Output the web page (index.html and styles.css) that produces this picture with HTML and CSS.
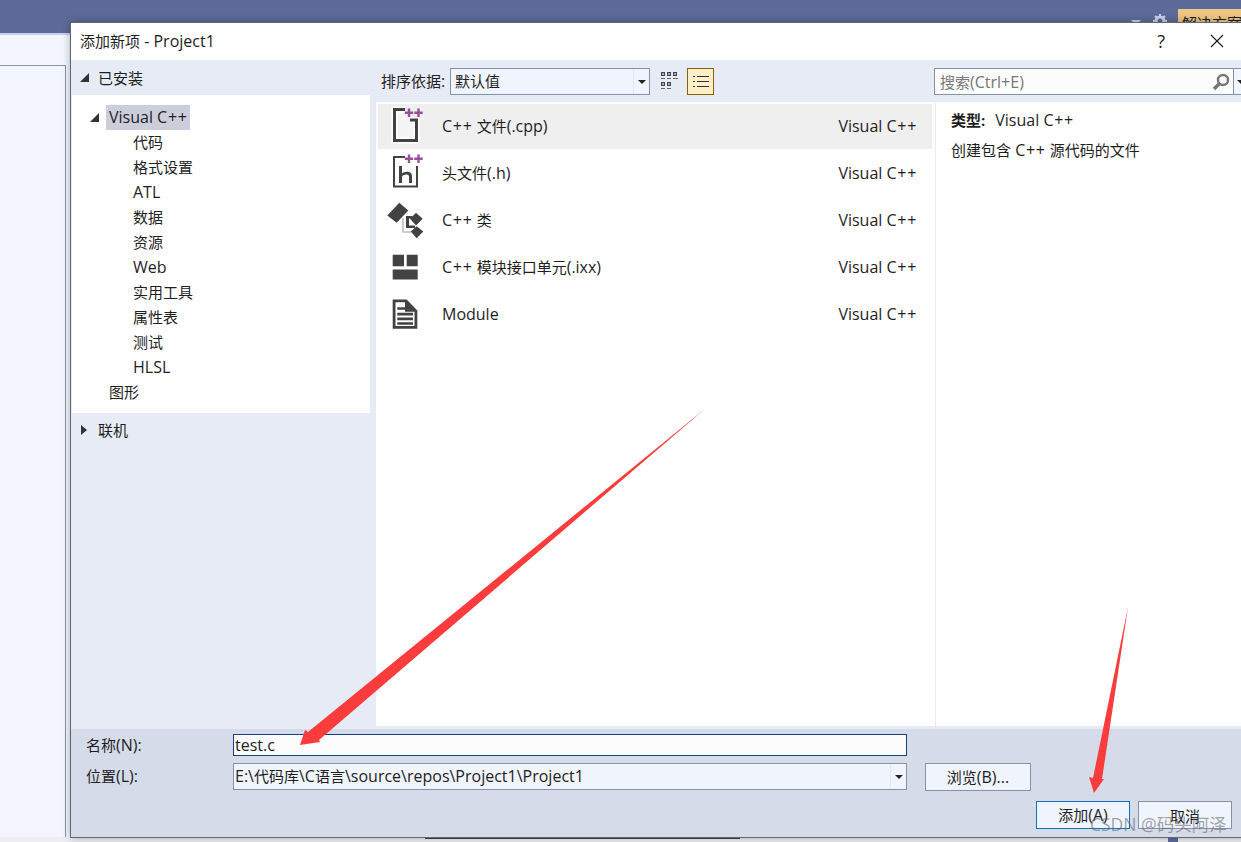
FILE: index.html
```html
<!DOCTYPE html>
<html lang="zh-CN">
<head>
    <meta charset="UTF-8">
    <title>添加新项 - Project1</title>
    <link rel="stylesheet" href="styles.css">
</head>
<body>
    <div class="ide">
        <div class="ide-top">
            <span class="ide-pin"></span>
            <svg class="ide-gear" viewBox="0 0 14 14" width="14" height="14"><circle cx="7" cy="7" r="4" fill="none" stroke="#c9d0e6" stroke-width="3"/><path d="M7 0v3M7 11v3M0 7h3M11 7h3M2 2l2 2M10 10l2 2M12 2l-2 2M4 10l-2 2" stroke="#c9d0e6" stroke-width="2"/></svg>
            <span class="ide-tab zh">解决方案</span>
        </div>
        <div class="ide-strip"></div>
        <div class="ide-main">
            <div class="ide-side"></div>
        </div>
        <div class="ide-bottom">
            <span class="ide-scroll"></span>
            <span class="ide-mark"></span>
        </div>
    </div>

    <div class="dialog">
        <div class="titlebar">
            <span class="title"><span class="zh">添加新项</span> - Project1</span>
            <span class="help">?</span>
            <svg class="close" viewBox="0 0 14 14" width="14" height="14"><path d="M1 1l12 12M13 1L1 13" stroke="#1a1a1a" stroke-width="1.1"/></svg>
        </div>

        <div class="content">
            <div class="left">
                <div class="installed"><span class="tri-open"></span><span class="zh">已安装</span></div>
                <div class="tree">
                    <div class="tree-root"><span class="tri-open"></span><span class="tree-sel">Visual <span class="cpp">C++</span></span></div>
                    <div class="tree-item zh">代码</div>
                    <div class="tree-item zh">格式设置</div>
                    <div class="tree-item">ATL</div>
                    <div class="tree-item zh">数据</div>
                    <div class="tree-item zh">资源</div>
                    <div class="tree-item">Web</div>
                    <div class="tree-item zh">实用工具</div>
                    <div class="tree-item zh">属性表</div>
                    <div class="tree-item zh">测试</div>
                    <div class="tree-item">HLSL</div>
                    <div class="tree-top zh">图形</div>
                </div>
                <div class="online"><span class="tri-closed"></span><span class="zh">联机</span></div>
            </div>

            <div class="center">
                <div class="toolbar">
                    <span class="sort-label"><span class="zh">排序依据</span>:</span>
                    <div class="combo"><span class="combo-text zh">默认值</span><span class="combo-btn"><span class="tri-down"></span></span></div>
                    <svg class="view-grid" viewBox="0 0 18 19" width="18" height="19">
                        <path d="M1 0h4v4H1zM7 0h4v4H7zM13 0h4v4h-4zM1 10h4v4H1zM7 10h4v4H7z" fill="#444"/>
                        <path d="M2 1h2v2H2zM8 1h2v2H8zM14 1h2v2h-2zM2 11h2v2H2zM8 11h2v2H8z" fill="#aab"/>
                        <path d="M1 6h4v1H1zM7 6h4v1H7zM13 6h5v1h-5zM1 16h4v1H1zM7 16h4v1H7z" fill="#666"/>
                    </svg>
                    <span class="view-list">
                        <svg viewBox="0 0 16 14" width="16" height="14"><path d="M0 1h2v1H0zM4 1h12v1H4zM0 6h2v1H0zM4 6h12v1H4zM0 11h2v1H0zM4 11h12v1H4z" fill="#333"/></svg>
                    </span>
                </div>
                <div class="list">
                    <div class="row row-active">
                        <span class="row-icon">
                            <svg viewBox="0 0 38 44" width="38" height="44">
                                <path d="M17 4.500H6.500v31h22V15H22" fill="#f4f4f4" stroke="#fff" stroke-width="6"/>
                                <path d="M17 4.500H6.500v31h22V15H22" fill="none" stroke="#424242" stroke-width="3"/>
                                <path d="M19.800 3.500h2.400v3h3v2.400h-3v3h-2.400v-3h-3V6.500h3zM29.300 3.500h2.400v3h3v2.400h-3v3h-2.400v-3h-3V6.500h3z" fill="#984f99"/>
                            </svg>
                        </span>
                        <span class="row-name"><span class="cpp">C++</span> <span class="zh">文件</span>(.cpp)</span>
                        <span class="row-lang">Visual <span class="cpp">C++</span></span>
                    </div>
                    <div class="row">
                        <span class="row-icon">
                            <svg viewBox="0 0 38 44" width="38" height="44">
                                <path d="M17 6H6v29.500h23V15" fill="#fff" stroke="#fff" stroke-width="5"/>
                                <path d="M17 6H6v29.500h23V15" fill="none" stroke="#424242" stroke-width="2"/>
                                <path d="M11 15h3v7.500c2-2.500 10-3 10 2.500v7h-3v-6.500c0-3-7-2.500-7 .5v6h-3z" fill="#424242"/>
                                <path d="M19.800 3.500h2.400v3h3v2.400h-3v3h-2.400v-3h-3V6.500h3zM29.300 3.500h2.400v3h3v2.400h-3v3h-2.400v-3h-3V6.500h3z" fill="#984f99"/>
                            </svg>
                        </span>
                        <span class="row-name"><span class="zh">头文件</span>(.h)</span>
                        <span class="row-lang">Visual <span class="cpp">C++</span></span>
                    </div>
                    <div class="row">
                        <span class="row-icon">
                            <svg class="icon-class" viewBox="0 0 38 44" width="38" height="44">
                                <path d="M15 20v14h8" fill="none" stroke="#bbb" stroke-width="1.500"/>
                                <path d="M-.7 17.500L11.300 4.800l9 7.700L8.700 24.800z" fill="#424242"/>
                                <path d="M22 20.800l6-6 6.700 6-6.700 6.700z" fill="#424242"/>
                                <path d="M22.700 33.500l6-5.300 6.600 5.300-6.600 6.700z" fill="#424242"/>
                                <path d="M18 18h6v2.500h-3v7h6V30h-9z" fill="#424242"/>
                            </svg>
                        </span>
                        <span class="row-name"><span class="cpp">C++</span> <span class="zh">类</span></span>
                        <span class="row-lang">Visual <span class="cpp">C++</span></span>
                    </div>
                    <div class="row">
                        <span class="row-icon">
                            <svg viewBox="0 0 38 44" width="38" height="44">
                                <path d="M4.700 9.800H16v11.400H4.700zM18.700 9.800h11v11.400h-11zM4.700 24.500h25v10h-25z" fill="#424242"/>
                            </svg>
                        </span>
                        <span class="row-name"><span class="cpp">C++</span> <span class="zh">模块接口单元</span>(.ixx)</span>
                        <span class="row-lang">Visual <span class="cpp">C++</span></span>
                    </div>
                    <div class="row">
                        <span class="row-icon">
                            <svg viewBox="0 0 38 44" width="38" height="44">
                                <path d="M4.700 7.500h14l10.600 11v18.300H4.700z" fill="#424242"/>
                                <path d="M7.500 10.300h9.500v9.500h9.500v14.200h-19z" fill="#fff"/>
                                <path d="M9.300 15.200h8v2.600h-8zM9.300 20.800H25v2.700H9.300zM9.300 25.500H25v2.700H9.300zM9.300 30.200H25v2.600H9.300z" fill="#424242"/>
                            </svg>
                        </span>
                        <span class="row-name">Module</span>
                        <span class="row-lang">Visual <span class="cpp">C++</span></span>
                    </div>
                </div>
            </div>

            <div class="right">
                <div class="search">
                    <span class="search-text"><span class="zh">搜索</span>(Ctrl+E)</span>
                    <svg class="search-icon" viewBox="0 0 18 18" width="18" height="18"><circle cx="11" cy="7" r="5" fill="none" stroke="#777" stroke-width="2.500"/><path d="M7 11l-5 5" stroke="#777" stroke-width="3.500"/></svg>
                    <span class="search-btn"><span class="tri-down"></span></span>
                </div>
                <div class="details">
                    <div class="detail-type"><b class="zh">类型:</b><span>Visual <span class="cpp">C++</span></span></div>
                    <div class="detail-desc"><span class="zh">创建包含</span> <span class="cpp">C++</span> <span class="zh">源代码的文件</span></div>
                </div>
            </div>
        </div>

        <div class="footer">
            <div class="field-row">
                <span class="field-label"><span class="zh">名称</span>(N):</span>
                <div class="field field-name">test.c</div>
            </div>
            <div class="field-row field-row2">
                <span class="field-label"><span class="zh">位置</span>(L):</span>
                <div class="field field-path"><span class="path-text">E:\<span class="zh">代码库</span>\C<span class="zh">语言</span>\source\repos\Project1\Project1</span><span class="path-btn"><span class="tri-down"></span></span></div>
                <button class="btn btn-browse"><span class="zh">浏览</span>(B)...</button>
            </div>
            <div class="actions">
                <button class="btn btn-add"><span class="zh">添加</span>(A)</button>
                <button class="btn btn-cancel zh">取消</button>
            </div>
        </div>
    </div>

    <svg class="arrows" viewBox="0 0 1241 842" width="1241" height="842">
        <polygon points="706,408 319,740 320,742 300,745 305,730 308,732"/>
        <polygon points="1128,607 1102,779 1104,779 1094,793 1089,777 1093,778"/>
    </svg>
    <div class="watermark">CSDN @码头阿泽</div>
</body>
</html>
```

FILE: styles.css
```css
* {
    box-sizing: border-box;
}

html, body {
    margin: 0;
    height: 842px;
    overflow: hidden;
}

body {
    position: relative;
    font-family: "Open Sans", "Noto Sans CJK SC", sans-serif;
    font-size: 16px;
    color: #1e1e1e;
}

/* chinese text runs a bit smaller than the latin around it */
.zh {
    font-size: 15px;
}

.cpp {
    letter-spacing: 0.7px;
}

/* IDE behind the dialog */
.ide {
    height: 842px;
    display: flex;
    flex-direction: column;
    background: #f3f6fe;
}

.ide-top {
    height: 33px;
    background: #5d6b99;
    display: flex;
    justify-content: flex-end;
    align-items: flex-start;
    padding: 9px 0 0;
}

.ide-pin {
    width: 0;
    height: 0;
    margin: 11px 12px 0 0;
    border-left: 5px solid transparent;
    border-right: 5px solid transparent;
    border-top: 5px solid #c9d0e6;
}

.ide-gear {
    margin: 5px 11px 0 0;
}

.ide-tab {
    width: 63px;
    height: 24px;
    padding: 3px 0 0 4px;
    background: #efc584;
    white-space: nowrap;
    overflow: hidden;
}

.ide-strip {
    height: 2px;
    background: #c7d0ef;
}

.ide-main {
    flex: 1;
    padding-top: 30px;
}

.ide-side {
    width: 66px;
    height: 100%;
    border-top: 1px solid #8a93a8;
    border-right: 1px solid #8a93a8;
}

.ide-bottom {
    height: 5px;
    background: #eeeef2;
    position: relative;
}

.ide-scroll {
    position: absolute;
    left: 425px;
    width: 315px;
    height: 2px;
    background: #444;
}

.ide-mark {
    position: absolute;
    left: 1168px;
    width: 10px;
    height: 5px;
    background: #5d6b99;
}

/* dialog */
.dialog {
    position: absolute;
    left: 70px;
    top: 22px;
    width: 1180px;
    height: 816px;
    display: flex;
    flex-direction: column;
    border: 1px solid #5f6675;
    background: #e6ebf5;
    box-shadow: 0 0 8px rgba(0, 0, 0, 0.3);
}

.titlebar {
    height: 37px;
    flex: none;
    display: flex;
    align-items: center;
    padding-left: 9px;
    padding-bottom: 1px;
    background: #fff;
}

.title {
    flex: 1;
}

.help {
    font-size: 18px;
    margin-right: 45px;
}

.close {
    margin-right: 25px;
}

.content {
    flex: 1;
    display: flex;
}

/* left column */
.left {
    width: 305px;
    flex: none;
}

.installed {
    height: 35px;
    display: flex;
    align-items: center;
    padding-left: 9px;
}

.installed .tri-open {
    margin-right: 9px;
}

.tree {
    width: 298px;
    height: 318px;
    margin-left: 1px;
    padding-top: 9px;
    background: #fff;
}

.tree-root {
    height: 26px;
    display: flex;
    align-items: center;
    padding-left: 18px;
}

.tree-sel {
    margin-left: 7px;
    padding: 0 2px 0 3px;
    height: 25px;
    line-height: 25px;
    background: #cccedb;
}

.tree-item {
    height: 25px;
    line-height: 25px;
    padding-left: 61px;
}

.tree-top {
    height: 25px;
    line-height: 25px;
    padding-left: 37px;
}

.online {
    display: flex;
    align-items: center;
    height: 25px;
    margin-top: 4px;
    padding-left: 10px;
}

.online .tri-closed {
    margin-right: 11px;
}

.tri-open {
    display: inline-block;
    width: 0;
    height: 0;
    border-left: 9px solid transparent;
    border-bottom: 9px solid #333;
}

.tri-closed {
    display: inline-block;
    width: 0;
    height: 0;
    border-top: 5px solid transparent;
    border-bottom: 5px solid transparent;
    border-left: 6px solid #333;
}

.tri-down {
    display: inline-block;
    width: 0;
    height: 0;
    border-left: 4px solid transparent;
    border-right: 4px solid transparent;
    border-top: 4px solid #222;
}

/* center column */
.center {
    width: 559px;
    flex: none;
    display: flex;
    flex-direction: column;
}

.toolbar {
    height: 42px;
    flex: none;
    display: flex;
    align-items: flex-start;
    padding: 8px 0 0 5px;
}

.sort-label {
    line-height: 27px;
    width: 69px;
    white-space: nowrap;
}

.combo {
    width: 200px;
    height: 27px;
    display: flex;
    border: 1px solid #8591a8;
    background: #f0f4fd;
}

.combo-text {
    flex: 1;
    line-height: 25px;
    padding-left: 4px;
}

.combo-btn {
    width: 16px;
    border-left: 1px solid #e3e8f4;
    display: flex;
    align-items: center;
    justify-content: center;
}

.view-grid {
    margin: 4px 0 0 10px;
}

.view-list {
    width: 27px;
    height: 27px;
    margin-left: 9px;
    display: flex;
    align-items: center;
    justify-content: center;
    background: #ffefc9;
    border: 1px solid #8a6200;
}

.list {
    flex: 1;
    margin-bottom: 3px;
    padding: 2px 3px 0 2px;
    background: #fff;
}

.row {
    height: 47px;
    display: flex;
    align-items: center;
}

.row-active {
    height: 45px;
    background: #efefef;
}

.row-active .row-name,
.row-active .row-lang {
    margin-top: -1px;
}

.row-icon {
    width: 64px;
    flex: none;
    display: flex;
    padding-left: 10px;
}

.row-icon svg {
    overflow: visible;
}

.row-name {
    flex: 1;
}

.row-lang {
    padding-right: 15px;
}

/* right column */
.right {
    flex: 1;
    display: flex;
    flex-direction: column;
    min-width: 0;
}

.search {
    height: 27px;
    margin: 8px 0 7px -1px;
    flex: none;
    display: flex;
    align-items: center;
    border: 1px solid #8591a8;
    background: #fcfcfc;
}

.search-text {
    flex: 1;
    padding-left: 5px;
    color: #777;
}

.search-icon {
    margin-right: 3px;
}

.search-btn {
    width: 15px;
    height: 100%;
    flex: none;
    display: flex;
    align-items: center;
    justify-content: center;
    border-left: 1px solid #8591a8;
    background: #f0f4fd;
}

.details {
    flex: 1;
    margin-bottom: 3px;
    padding: 8px 0 0 15px;
    background: #fff;
    border-left: 1px solid #e6ebf5;
}

.detail-type {
    height: 20px;
    line-height: 20px;
}

.detail-type b {
    margin-right: 10px;
}

.detail-desc {
    margin-top: 10px;
    line-height: 20px;
}

/* footer */
.footer {
    height: 108px;
    flex: none;
    padding: 5px 0 0 15px;
    background: #d5dbe8;
}

.field-row {
    display: flex;
    align-items: flex-start;
}

.field-row2 {
    margin-top: 7px;
}

.field-label {
    width: 147px;
    line-height: 22px;
}

.field-row2 .field-label {
    line-height: 27px;
}

.field {
    width: 674px;
    padding-left: 1px;
}

.field-name {
    height: 22px;
    line-height: 20px;
    border: 1px solid #1b3f7d;
    background: #fcfcfc;
}

.field-path {
    height: 27px;
    display: flex;
    line-height: 25px;
    border: 1px solid #8591a8;
    background: #f0f4fd;
}

.path-text {
    flex: 1;
}

.path-btn {
    width: 16px;
    border-left: 1px solid #e3e8f4;
    display: flex;
    align-items: center;
    justify-content: center;
}

.btn {
    font: inherit;
    color: inherit;
    padding: 0;
    background: #f0f4fd;
    border: 1px solid #8591a8;
}

.btn.zh {
    font-size: 15px;
}

.btn-browse {
    width: 106px;
    height: 28px;
    margin-left: 18px;
}

.actions {
    display: flex;
    margin-top: 10px;
    margin-left: 950px;
}

.btn-add {
    width: 94px;
    height: 28px;
    border-color: #0e70c0;
}

.btn-cancel {
    width: 94px;
    height: 28px;
    margin-left: 8px;
}

/* annotations over the screenshot */
.arrows {
    position: absolute;
    left: 0;
    top: 0;
    fill: #fa3c3c;
}

.watermark {
    position: absolute;
    left: 1090px;
    top: 811px;
    font-size: 17.5px;
    white-space: nowrap;
    color: rgba(90, 90, 100, 0.55);
}
```
